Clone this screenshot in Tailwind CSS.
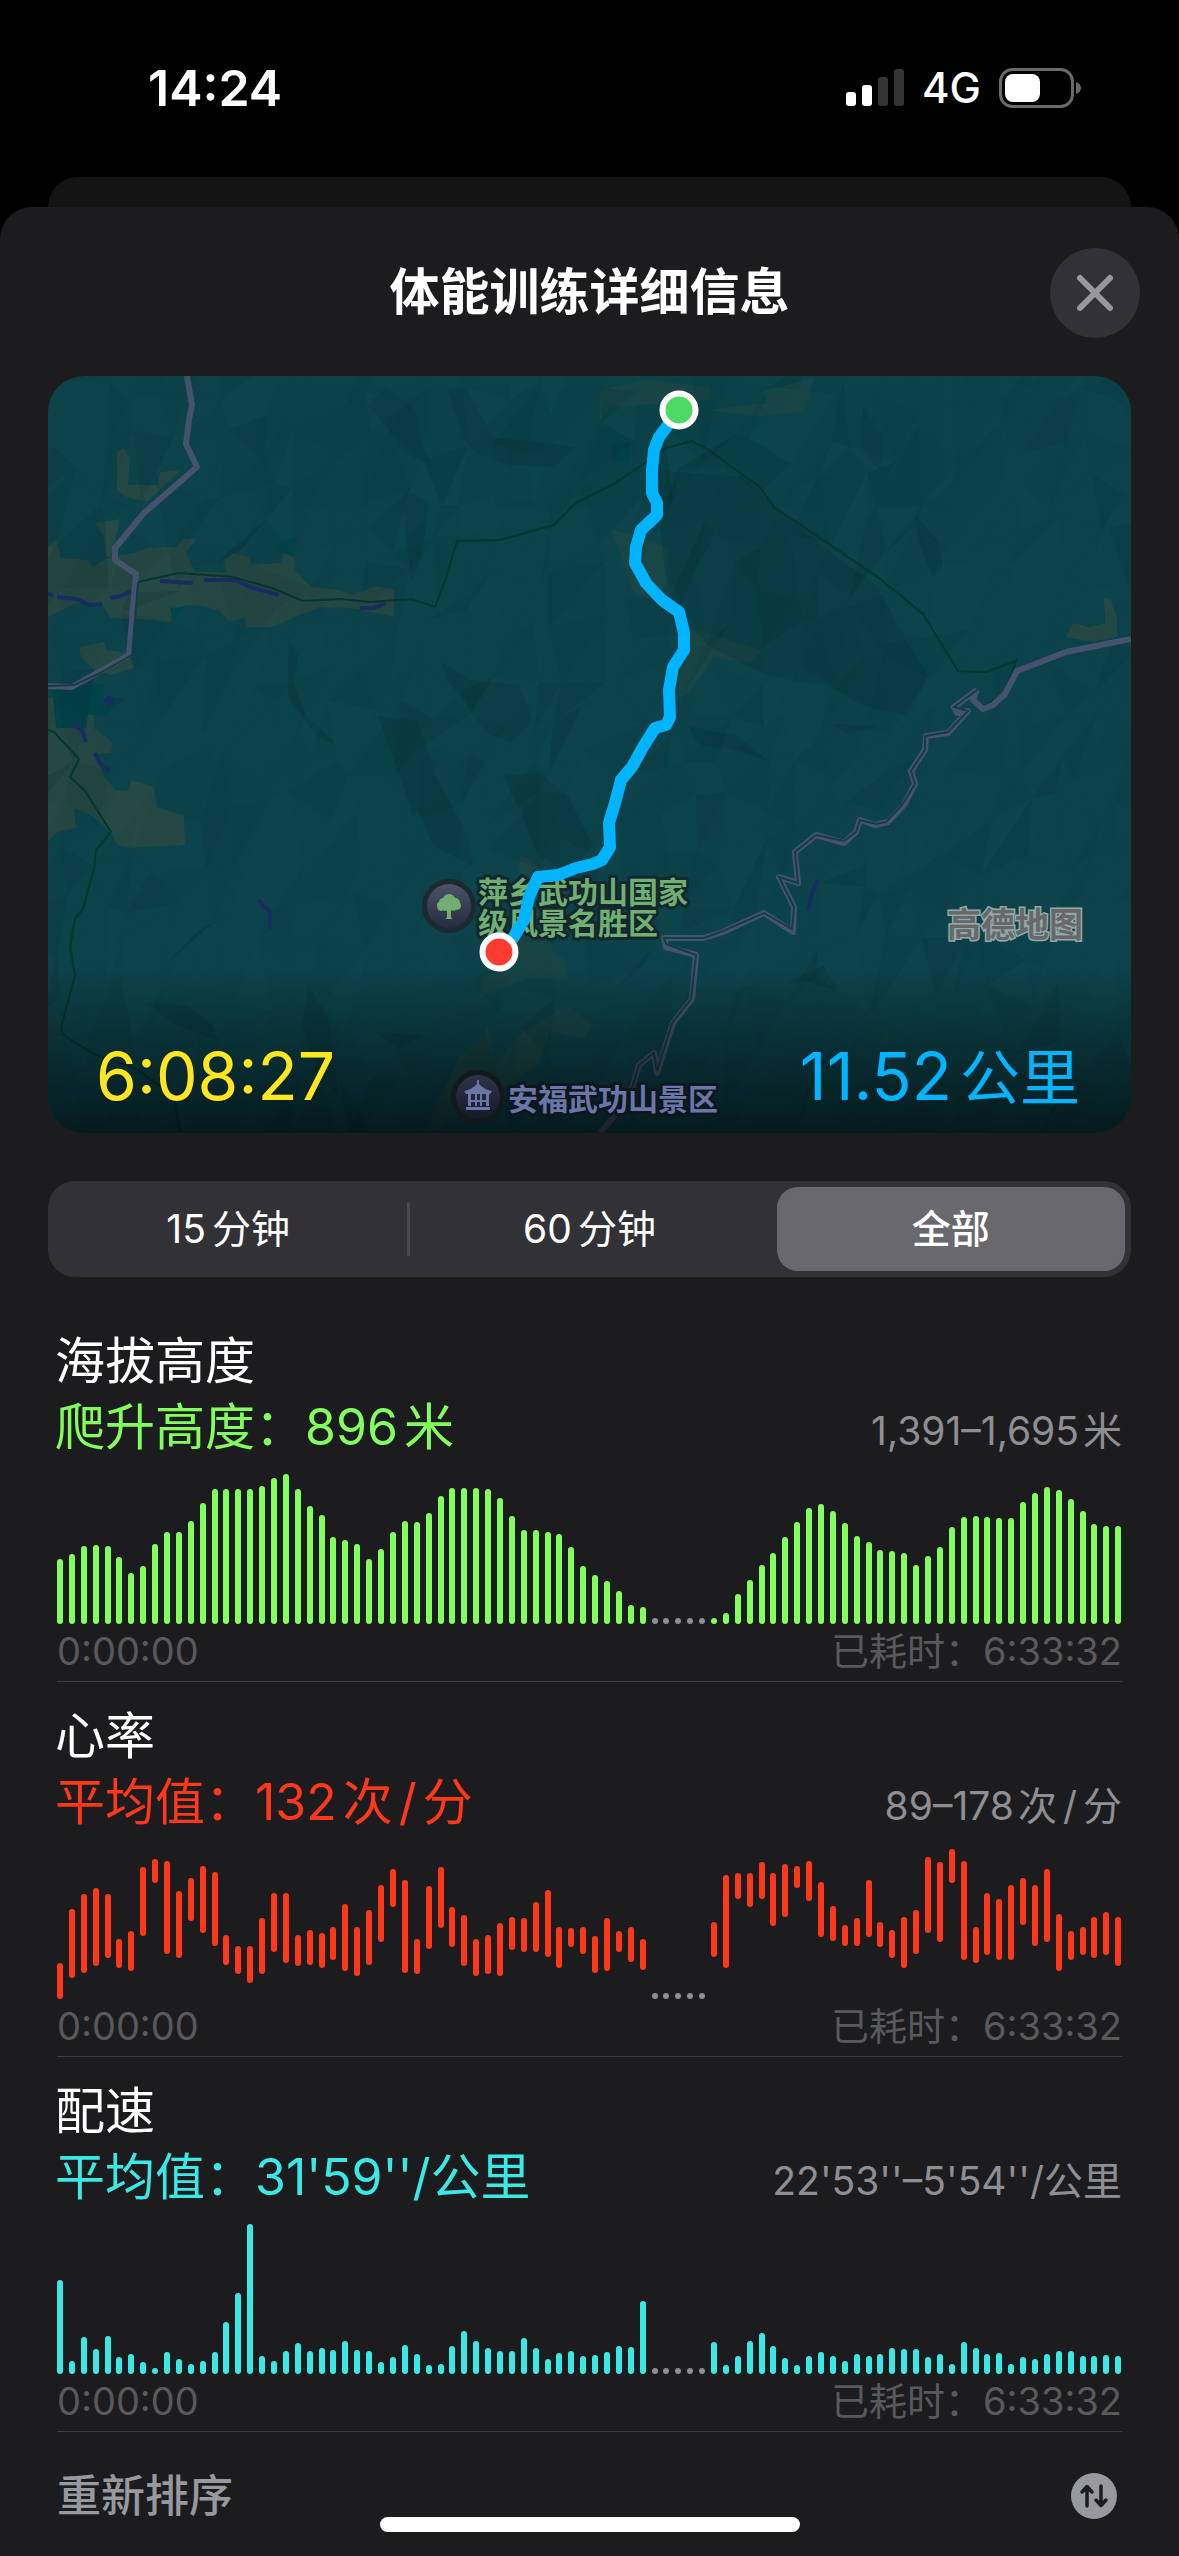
<!DOCTYPE html>
<html lang="zh-CN">
<head>
    <meta charset="UTF-8">
    <meta name="viewport" content="width=device-width, initial-scale=1.0">
    <title>体能训练详细信息</title>
    <script src="https://cdn.jsdelivr.net/npm/@tailwindcss/browser@4"></script>
</head>
<body class="bg-black text-white font-['Inter','Noto_Sans_CJK_SC',sans-serif]">
<div class="relative min-h-screen flex flex-col overflow-hidden">
    <!-- Status bar -->
    <header class="h-[177px] flex items-start justify-between pt-[60px] pl-[148px] pr-[97px]">
        <div class="text-[50px] leading-[56px] font-semibold">14:24</div>
        <div class="flex items-center h-[56px] gap-[18px]">
            <svg class="w-[58px] h-[38px]" viewBox="0 0 58 38" aria-hidden="true">
                <rect x="0" y="23" width="10" height="14" rx="3" fill="#fff"/>
                <rect x="16" y="16" width="10" height="21" rx="3" fill="#fff"/>
                <rect x="32" y="8" width="10" height="29" rx="3" fill="#333"/>
                <rect x="48" y="0" width="10" height="37" rx="3" fill="#333"/>
            </svg>
            <span class="text-[42px] leading-[56px] font-medium">4G</span>
            <svg class="w-[83px] h-[40px]" viewBox="0 0 83 40" aria-hidden="true">
                <rect x="1.5" y="1.5" width="72" height="37" rx="12" fill="none" stroke="#6a6a6a" stroke-width="3"/>
                <rect x="6" y="6" width="35" height="28" rx="8" fill="#fff"/>
                <path d="M77 14c3 1 5 3 5 6s-2 5-5 6z" fill="#6a6a6a"/>
            </svg>
        </div>
    </header>

    <!-- Card behind the sheet -->
    <div class="mx-12 h-[30px] rounded-t-[30px] bg-[#141414]"></div>

    <!-- Sheet -->
    <main class="flex-1 rounded-t-[32px] bg-[#1c1c1e] px-12 pb-[30px]">
        <div class="relative h-[169px] flex items-center justify-center">
            <h1 class="text-[50px] leading-[60px] font-semibold">体能训练详细信息</h1>
            <button type="button" aria-label="关闭" class="absolute right-[-9px] top-[41px] w-[90px] h-[90px] rounded-full bg-[#323136] flex items-center justify-center">
                <svg class="w-[40px] h-[40px]" viewBox="0 0 40 40" fill="none" stroke="#98989f" stroke-width="6" stroke-linecap="round" aria-hidden="true">
                    <path d="M5 5L35 35M35 5L5 35"/>
                </svg>
            </button>
        </div>

        <!-- Route map -->
        <section class="relative h-[757px] rounded-[36px] overflow-hidden bg-[#0d444b]">
            <svg class="w-full h-full" viewBox="0 0 1083 757" preserveAspectRatio="xMidYMid slice" font-family="Inter, 'Noto Sans CJK SC', sans-serif">
                <defs>
                    <linearGradient id="fade" x1="0" y1="0" x2="0" y2="1">
                        <stop offset="0" stop-color="#000" stop-opacity="0"/>
                        <stop offset="1" stop-color="#000" stop-opacity="0.6"/>
                    </linearGradient>
                    <linearGradient id="poi" x1="0" y1="0" x2="0" y2="1">
                        <stop offset="0" stop-color="#4c5268"/>
                        <stop offset="1" stop-color="#262b3d"/>
                    </linearGradient>
                    <linearGradient id="poiDark" x1="0" y1="0" x2="0" y2="1">
                        <stop offset="0" stop-color="#2f3346"/>
                        <stop offset="1" stop-color="#161926"/>
                    </linearGradient>
                </defs>

                <!-- villages and fields -->
                <g fill="#254944">
                    <path d="M0 171L8 163 13 182 38 184 46 191 56 184 63 181 90 176 99 172 128 171 135 163 148 163 138 177 147 196 178 196 176 186 185 177 201 181 203 189 233 187 235 177 246 181 247 194 263 211 292 214 303 219 328 210 346 214 346 241 303 232 271 231 224 251 199 251 197 242 181 246 171 234 153 230 138 229 124 234 122 247 106 244 63 242 53 227 28 227 0 241Z"/>
                    <path d="M69 76L76 72 82 82 80 109 110 109 112 96 133 94 99 126 78 121 69 114Z"/>
                    <path d="M47 147L72 143 69 157 63 181 58 181 56 161Z"/>
                    <path d="M31 271L56 266 58 274 81 277 86 292 63 299 46 294 33 281Z"/>
                    <path d="M0 321L46 326 46 352 65 367 63 377 46 378 57 401 67 414 80 415 83 404 106 411 109 431 136 439 137 469 81 472 69 469 63 456 46 441 26 432 28 452 10 456 0 464Z"/>
                    <path d="M1018 261L1025 247 1041 251 1057 247 1056 221 1063 224 1069 242 1069 261 1045 266Z"/>
                </g>
                <g fill="#254944" opacity="0.5">
                    <path d="M552 14L598 4 663 11 663 24 623 27 563 31 552 44Z"/>
                    <path d="M659 34L720 27 715 15 766 2 756 36 712 40Z"/>
                    <path d="M641 251L713 274 702 287 666 281 641 317 623 327 629 294Z"/>
                    <path d="M564 154L590 160 620 172 622 200 608 226 585 215 575 186Z"/>
                    <path d="M472 478L490 490 484 515 505 575 518 586 519 604 480 602 448 615 430 622 436 600 465 590Z"/>
                    <path d="M412 680L436 660 440 650 448 690 470 660 500 640 520 630 545 650 535 664 502 655 490 690 440 720 385 757 375 757Z"/>
                </g>
                <g fill="#00444a">
                    <path d="M4 312L56 308 55 322 78 322 55 340 40 338 38 352 8 352Z"/>
                    <path d="M231 167L247 160 247 179 232 176ZM122 232L135 231 127 245ZM564 67H581V86H564Z"/>
                </g>

                <!-- hill shading -->
                <g id="hills"></g>
                <g fill="#00191f" opacity="0.13">
                    <path d="M399 14L419 12 430 34 446 62 492 66 528 71 506 91 460 89 428 77 417 64Z"/>
                    <path d="M320 30L338 10 367 34 374 67 385 91 353 76 338 50Z"/>
                    <path d="M363 117L381 127 374 181 363 207 356 134Z"/>
                    <path d="M394 286L421 304 471 309 485 344 463 367 438 357 421 331 399 304Z"/>
                    <path d="M618 95L695 101 727 131 788 181 830 210 850 250 880 300 860 340 816 330 781 310 720 300 660 270 640 240 618 200 612 150Z"/>
                    <path d="M695 101L727 131 788 181 781 207 816 247 816 281 781 261 752 227 723 224 681 224 656 237 648 194 656 167 695 154Z"/>
                    <path d="M240 260L250 280 246 310 258 340 290 370 268 360 240 320Z"/>
                    <path d="M330 340L370 345 385 390 389 414 365 440 352 400Z"/>
                    <path d="M455 400L490 396 520 420 545 470 520 495 490 480 470 430Z"/>
                    <path d="M365 395L388 400 420 460 425 490 385 470 368 430Z"/>
                    <path d="M641 250L655 255 668 258 667 264 650 260ZM700 262L722 274 700 272ZM783 348L830 350 800 357Z"/>
                    <path d="M98 627L140 630 165 650 170 665 130 650ZM260 610L280 640 290 720 270 700 254 650Z"/>
                    <path d="M292 704L320 750 322 757 300 757ZM325 655L375 660 350 672Z"/>
                    <path d="M640 350L690 360 720 385 690 375 650 368ZM738 607L775 590 790 614 760 606Z"/>
                    <path d="M868 140L890 165 895 190 885 200 870 165ZM815 30L835 60 832 95 815 75Z"/>
                    <path d="M690 110L702 135 700 165 690 150ZM620 100L640 108 637 115 615 112Z"/>
                </g>

                <!-- rivers -->
                <g fill="none" stroke="#192c62" stroke-width="4">
                    <path d="M0 218L5 219M9 221L28 223 42 229 54 228M63 222L73 220 84 215M112 205L145 207M156 204L187 204 205 212 231 219M312 232L325 232 338 227M24 348L34 354 38 366M47 377L52 388 62 395M210 524L222 536 222 553M770 504L764 516 760 535"/>
                    <circle cx="61" cy="325" r="3"/>
                </g>

                <!-- park boundary -->
                <g fill="none" stroke="#04372b" stroke-width="2">
                    <path d="M90 206L131 197 185 201 224 212 255 225 292 223 322 226 364 223 387 231 398 202 409 165 452 164 506 149 528 127 552 115 566 108 597 87 618 72 644 65 659 73 695 99 712 111 726 131 831 202 875 238 910 295 938 296 968 285 957 316 935 332"/>
                    <path d="M0 354L7 357 31 383 22 401 37 415 63 456 48 474 46 492 35 533 27 542 22 571 27 599 13 652 14 658 44 677 56 682 87 692 110 709 126 722 132 757"/>
                </g>

                <!-- roads -->
                <g fill="none" stroke="#44526e" stroke-linejoin="round">
                    <path stroke-width="6" d="M139 0L144 29 141 44 138 68 149 91 96 137 67 172 67 184 88 198 81 279 24 311 0 310"/>
                    <path stroke-width="6" d="M1083 263L1018 276 969 295 957 318 945 329 935 333 925 324 929 314"/>
                    <path stroke-width="6" d="M929 314L906 331 909 337 920 335 900 357 878 360 877 374 863 395 867 408 856 429 840 446 827 449 812 444 808 456 796 467 768 459 747 476 750 507 731 501 746 531 745 556 716 537 675 556 656 562 616 562 618 571 648 579 644 623 625 647 609 697 606 677 591 689 584 712 563 744 552 757"/>
                </g>
                <g fill="none" stroke="#153d42" stroke-width="2">
                    <path d="M90 206L84 279 50 298 26 309 0 310"/>
                    <path d="M929 314L906 331 920 335 900 356 877 360 877 374 863 395 867 408 854 429 838 446 828 448 812 444 808 456 796 465 768 459 747 476 750 507 731 501 746 531 744 553 716 537 675 555 656 562 616 562 618 568 648 579 643 623 624 647 609 695 606 677 591 689 584 712"/>
                </g>

                <rect y="590" width="1083" height="167" fill="url(#fade)"/>

                <!-- points of interest -->
                <circle cx="401" cy="530" r="27" fill="#1c2a30"/>
                <circle cx="401" cy="530" r="22" fill="url(#poi)"/>
                <path fill="#70ae72" d="M401 518c3 0 5 2 6 4 3 0 5 2 5 5 1 1 1 2 1 3 0 3-3 4-5 4-2 1-4 1-5 0v7c0 1 2 2 2 2h-8s2-1 2-2v-6c-2 0-4-1-5 0-3 0-5-2-5-5 0-2 0-3 2-4 0-2 2-4 4-4 1-2 3-4 6-4z"/>
                <circle cx="430" cy="721" r="27" fill="#11191c"/>
                <circle cx="430" cy="721" r="22" fill="url(#poiDark)"/>
                <path fill="#6b76a8" d="M429 704h2v4c3 3 7 6 13 7l-2 3h-24l-2-3c6-1 10-4 13-7zM420 718h3v12h-3zM427 718h2v12h-2zM432 718h2v12h-2zM438 718h3v12h-3zM420 724h20v2h-20zM418 731h24v3h-24z"/>
                <g font-size="30" font-weight="700" paint-order="stroke" stroke-width="6" stroke-linejoin="round">
                    <g fill="#70ae72" stroke="#14272c">
                        <text x="430" y="527">萍乡武功山国家</text>
                        <text x="430" y="558">级风景名胜区</text>
                    </g>
                    <text x="460" y="734" fill="#6b76a8" stroke="#0c171d">安福武功山景区</text>
                </g>
                <text x="899" y="561" font-size="34" font-weight="700" fill="#686868" stroke="#93a9ab" stroke-width="3" paint-order="stroke">高德地图</text>

                <!-- route -->
                <path fill="none" stroke="#00b4ff" stroke-width="12" stroke-linejoin="round" d="M631 34L620 49 611 61 606 74 604 94 604 117 609 127 609 139 593 154 588 171 587 187 598 207 614 224 631 236 636 257 636 274 625 291 621 314 622 341 618 349 607 352 595 371 584 391 573 404 567 427 561 447 562 471 554 484 545 488 528 492 510 499 490 501 481 521 476 544 465 562 451 576"/>
                <circle cx="631" cy="34" r="16.5" fill="#4cd964" stroke="#fff" stroke-width="6"/>
                <circle cx="451" cy="576" r="16.5" fill="#ff3b30" stroke="#fff" stroke-width="6"/>
            </svg>
            <div class="absolute inset-x-0 bottom-0 px-12 pb-[15px] flex justify-between text-[66px] leading-[80px]">
                <span class="text-[#ffe620]">6:08:27</span>
                <span class="pr-[3px] text-[#00b4ff]">11.52<span class="ml-2 text-[60px]">公里</span></span>
            </div>
        </section>

        <!-- Interval picker -->
        <div class="mt-12 h-24 p-1.5 rounded-[27px] bg-[#323136] flex text-[39px] leading-[48px]">
            <button type="button" class="flex-1">15<span class="ml-1.5">分钟</span></button>
            <span class="w-[3px] mx-[5px] my-[15px] rounded-full bg-[#48484d]"></span>
            <button type="button" class="flex-1">60<span class="ml-1.5">分钟</span></button>
            <button type="button" aria-pressed="true" class="flex-1 ml-[13px] rounded-[21px] bg-[#69686e] font-medium">全部</button>
        </div>

        <!-- Metrics -->
        <div class="mt-[30px] px-[9px]">
            <section class="h-[375px] pt-[21px] border-b border-[#3d3d40]">
                <h2 class="-ml-[2px] text-[50px] leading-[66px]">海拔高度</h2>
                <div class="h-[66px] flex items-baseline justify-between leading-[66px]">
                    <p class="-ml-[2px] text-[50px] text-[#82ff5c]">爬升高度：896<span class="ml-1.5">米</span></p>
                    <p class="text-[39px] text-[#8e8e93]">1,391–1,695<span class="ml-1">米</span></p>
                </div>
                <div id="elevation" class="mt-[14px] h-[150px] flex items-end justify-between"></div>
                <div class="mt-[3px] flex justify-between text-[38px] leading-[48px] text-[#59595c]">
                    <span>0:00:00</span>
                    <span>已耗时：6:33:32</span>
                </div>
            </section>

            <section class="h-[375px] pt-[21px] border-b border-[#3d3d40]">
                <h2 class="-ml-[2px] text-[50px] leading-[66px]">心率</h2>
                <div class="h-[66px] flex items-baseline justify-between leading-[66px]">
                    <p class="-ml-[2px] text-[50px] text-[#ff3819]">平均值：132<span class="ml-1.5">次</span><span class="mx-1.5">/</span>分</p>
                    <p class="text-[39px] text-[#8e8e93]">89–178<span class="ml-1">次</span><span class="mx-1.5">/</span>分</p>
                </div>
                <div id="heartRate" class="mt-[14px] h-[150px] flex items-end justify-between"></div>
                <div class="mt-[3px] flex justify-between text-[38px] leading-[48px] text-[#59595c]">
                    <span>0:00:00</span>
                    <span>已耗时：6:33:32</span>
                </div>
            </section>

            <section class="h-[375px] pt-[21px] border-b border-[#3d3d40]">
                <h2 class="-ml-[2px] text-[50px] leading-[66px]">配速</h2>
                <div class="h-[66px] flex items-baseline justify-between leading-[66px]">
                    <p class="-ml-[2px] text-[50px] text-[#3ae9e6]">平均值：31'59''/公里</p>
                    <p class="text-[39px] text-[#8e8e93]">22'53''–5'54''/公里</p>
                </div>
                <div id="pace" class="mt-[14px] h-[150px] flex items-end justify-between"></div>
                <div class="mt-[3px] flex justify-between text-[38px] leading-[48px] text-[#59595c]">
                    <span>0:00:00</span>
                    <span>已耗时：6:33:32</span>
                </div>
            </section>
        </div>

        <button type="button" class="mt-[34px] w-full pl-[9px] pr-[14px] flex items-center justify-between text-[44px] leading-[60px] font-medium text-[#98989f]">
            重新排序
            <svg class="w-[46px] h-[46px]" viewBox="0 0 46 46" aria-hidden="true">
                <circle cx="23" cy="23" r="23" fill="#98989f"/>
                <path d="M16 33V14M11 19L16 13.500 21 19M30 13V32M25 27L30 32.500 35 27" fill="none" stroke="#1c1c1e" stroke-width="3.500" stroke-linecap="round" stroke-linejoin="round"/>
            </svg>
        </button>
    </main>

    <!-- Home indicator -->
    <div class="absolute bottom-6 left-1/2 -translate-x-1/2 w-[420px] h-[15px] rounded-full bg-white"></div>
</div>

<script>
    // null = paused, number = bar height, [low, high] = range bar
    const pause = [null, null, null, null, null];
    const elevation = [
        65, 70, 78, 79, 78, 67, 51, 58, 80, 92, 92, 103, 121, 135, 135, 135, 135, 138, 146, 150,
        135, 118, 109, 87, 84, 80, 65, 75, 92, 103, 102, 111, 128, 136, 136, 136, 135, 126, 108, 94,
        94, 92, 90, 77, 58, 49, 43, 33, 19, 17, ...pause, 6, 11, 30, 44, 59, 71, 87, 102, 116, 120,
        113, 101, 88, 82, 74, 73, 71, 59, 68, 77, 97, 107, 108, 107, 106, 106, 122, 131, 137, 134,
        125, 113, 100, 98, 98
    ];
    const heartRate = [
        [0, 36], [21, 90], [26, 105], [33, 111], [41, 105], [31, 60], [28, 68], [63, 132], [116, 140], [45, 138],
        [41, 108], [78, 121], [66, 133], [53, 127], [34, 64], [25, 53], [16, 53], [25, 81], [47, 106], [36, 106],
        [33, 64], [34, 69], [31, 66], [39, 72], [28, 95], [23, 72], [34, 89], [57, 114], [92, 130], [26, 119],
        [25, 60], [50, 113], [71, 132], [52, 92], [33, 84], [23, 60], [25, 64], [23, 76], [49, 82], [47, 81],
        [47, 97], [42, 109], [31, 72], [52, 71], [45, 72], [26, 63], [28, 81], [47, 68], [37, 72], [29, 60],
        ...pause,
        [42, 77], [31, 124], [100, 126], [92, 126], [100, 137], [73, 126], [82, 135], [111, 133], [98, 138], [62, 117],
        [58, 93], [53, 74], [53, 81], [62, 119], [52, 77], [41, 69], [31, 82], [45, 89], [66, 142], [57, 137],
        [116, 150], [39, 138], [36, 72], [44, 106], [39, 100], [39, 114], [74, 121], [53, 114], [57, 130], [28, 85],
        [39, 68], [44, 72], [41, 82], [44, 87], [33, 82]
    ];
    const pace = [
        94, 13, 37, 25, 38, 17, 20, 12, 6, 22, 15, 10, 13, 22, 52, 81, 150, 18, 13, 23,
        31, 23, 26, 24, 33, 24, 23, 12, 17, 29, 20, 9, 10, 28, 43, 33, 26, 23, 23, 36,
        26, 15, 21, 23, 18, 19, 22, 28, 27, 73, ...pause, 32, 9, 18, 33, 41, 28, 16, 9, 18, 22,
        18, 13, 20, 18, 20, 26, 25, 25, 17, 20, 10, 32, 26, 20, 21, 10, 17, 15, 20, 23,
        23, 18, 18, 19, 18
    ];

    function drawBars(id, data, barClass) {
        document.getElementById(id).innerHTML = data.map(d => {
            if (d === null) return '<i class="w-1.5 h-1.5 rounded-full bg-[#8e8e93]"></i>';
            const [low, high] = Array.isArray(d) ? d : [0, d];
            return `<i class="${barClass}" style="height:${high - low}px;margin-bottom:${low}px"></i>`;
        }).join('');
    }
    drawBars('elevation', elevation, 'w-1.5 rounded-full bg-[#82ff5c]');
    drawBars('heartRate', heartRate, 'w-1.5 rounded-full bg-[#ff3819]');
    drawBars('pace', pace, 'w-1.5 rounded-full bg-[#3ae9e6]');

    // Low-poly relief: jittered grid split into triangles
    let seed = 11;
    const rand = () => (seed = (seed * 16807) % 2147483647) / 2147483647;
    const cols = 34, rows = 18, pts = [];
    for (let r = 0; r <= rows; r++) {
        for (let c = 0; c <= cols; c++) {
            pts.push([Math.round((c + rand() * 0.9 - 0.45) * 33 - 15), Math.round((r + rand() * 0.9 - 0.45) * 46 - 25)]);
        }
    }
    let tris = '';
    for (let r = 0; r < rows; r++) {
        for (let c = 0; c < cols; c++) {
            const a = pts[r * (cols + 1) + c], b = pts[r * (cols + 1) + c + 1];
            const d = pts[(r + 1) * (cols + 1) + c], e = pts[(r + 1) * (cols + 1) + c + 1];
            [[a, b, d], [b, e, d]].forEach(t => {
                tris += `<polygon points="${t.join(' ')}" fill="#00191f" opacity="${(rand() * rand() * 0.16).toFixed(2)}"/>`;
            });
        }
    }
    document.getElementById('hills').innerHTML = tris;
</script>
</body>
</html>
